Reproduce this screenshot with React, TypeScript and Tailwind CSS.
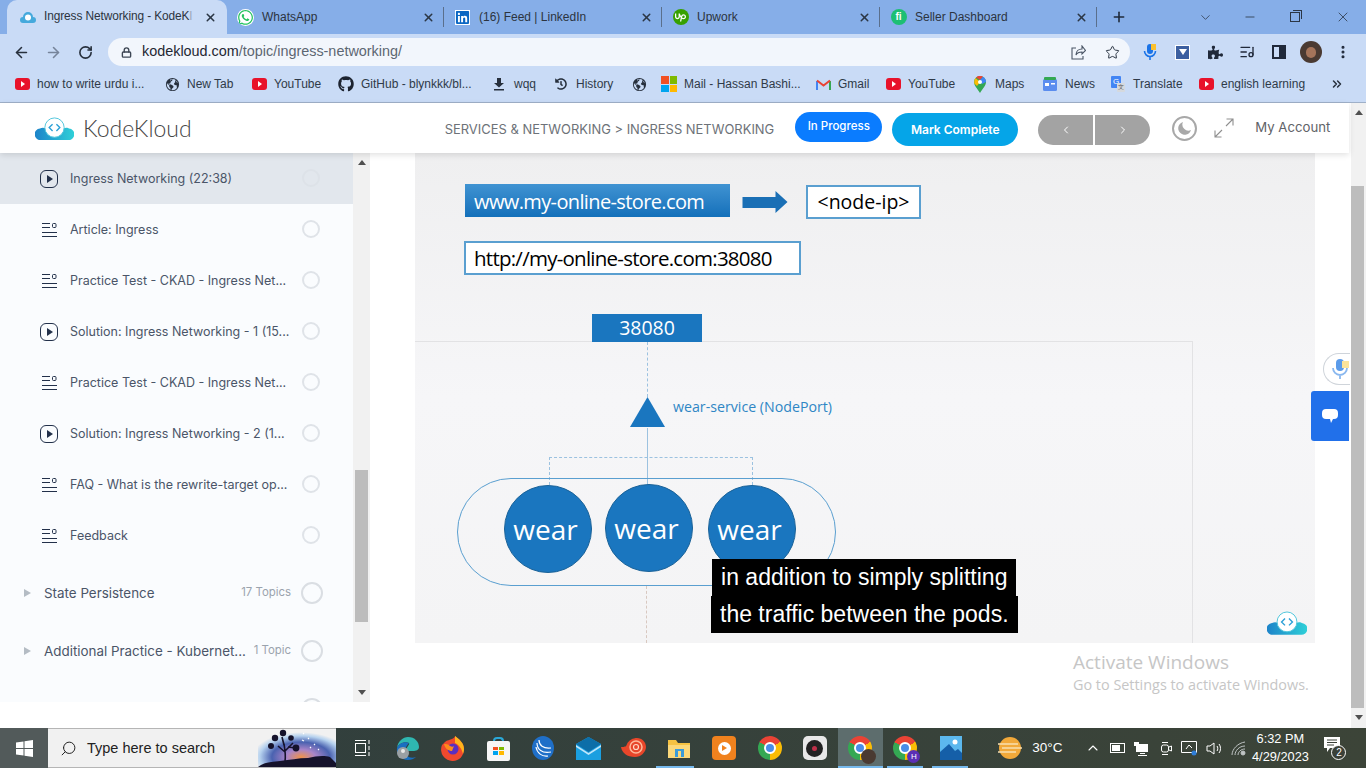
import React from 'react';
import { ArrowLeft, ArrowRight, RotateCw, Lock, Star, ListMusic, MoreVertical, ChevronDown, Minus, X, Plus, ChevronRight, ChevronLeft, Search, ChevronUp, ChevronsRight } from 'lucide-react';
import { FaWhatsapp, FaGithub, FaLinkedin, FaPuzzlePiece, FaHistory } from 'react-icons/fa';
import { SiUpwork } from 'react-icons/si';
import { IoEarth } from 'react-icons/io5';

const inter = "font-['Inter',sans-serif]";
const slide = "font-['Open_Sans',sans-serif]";

const Cloud = ({ size = 40, id }: { size?: number; id: string }) => (
  <svg width={size} height={size * 0.62} viewBox="0 0 40 25">
    <defs>
      <linearGradient id={id} x1="0" x2="1" y1="0" y2="0">
        <stop offset="0" stopColor="#1d83c9" />
        <stop offset="1" stopColor="#2fd0d8" />
      </linearGradient>
    </defs>
    <path d="M6 25a6 6 0 0 1-1-12c2-1 4-1 6 0 1-6 5-10 9-10s8 4 9 10c2-1 5-1 6 0a6 6 0 0 1-1 12z" fill={`url(#${id})`} />
    <circle cx="20" cy="12" r="10" fill="#fff" stroke="#52c6dc" strokeWidth="1" />
    <path d="M18 8.5 14.5 12l3.5 3.5M22 8.5l3.5 3.5-3.5 3.5" fill="none" stroke="#2a9fd6" strokeWidth="1.4" />
  </svg>
);

const YT = () => (
  <span className="w-[15px] h-[12px] rounded-[3px] bg-[#e8122a] flex items-center justify-center shrink-0">
    <span className="w-0 h-0 ml-px border-y-[3px] border-y-transparent border-l-[4px] border-l-white" />
  </span>
);

const CloseX = () => <X size={13} strokeWidth={2.8} className="text-[#2b3645] shrink-0" />;

const Tab = ({ icon, title, className }: { icon: React.ReactNode; title: string; className: string }) => (
  <div className={`relative flex items-center h-full pl-[10px] pr-[9px] ${className}`}>
    <span className="w-[17px] flex justify-center shrink-0">{icon}</span>
    <span className="ml-[8px] text-[12px] text-[#2c3440] flex-1 whitespace-nowrap">{title}</span>
    <CloseX />
    <span className="absolute right-0 top-[7px] h-[20px] w-px bg-[#5a6f8c]" />
  </div>
);

const Bookmark = ({ icon, label, className }: { icon: React.ReactNode; label?: string; className: string }) => (
  <div className={`flex items-center gap-[7px] text-[12px] text-[#2f3a48] whitespace-nowrap shrink-0 ${className}`}>
    <span className="w-[16px] flex justify-center shrink-0">{icon}</span>
    {label && <span>{label}</span>}
  </div>
);

const PlayIcon = () => (
  <span className="w-[18px] h-[18px] rounded-[6px] border-[1.5px] border-[#22304a] flex items-center justify-center shrink-0">
    <span className="w-0 h-0 ml-px border-y-[4px] border-y-transparent border-l-[6px] border-l-[#22304a]" />
  </span>
);

const ArticleIcon = () => (
  <svg width="15" height="14" viewBox="0 0 15 14" className="shrink-0 mx-[2px] mr-px" fill="none" stroke="#22304a" strokeWidth="1">
    <path d="M0 .5h8M0 4.5h8M0 9.5h15M0 13.5h15" />
    <rect x="10.5" y="0.5" width="3.5" height="4" rx="1" />
  </svg>
);

const Lesson = ({ kind, title, active }: { kind: 'play' | 'doc'; title: string; active?: boolean }) => (
  <div className={`flex items-center h-[51px] pl-[40px] pr-[33px] ${active ? 'bg-[#e2e7ed]' : ''}`}>
    {kind === 'play' ? <PlayIcon /> : <ArticleIcon />}
    <span className={`ml-[12px] mt-[2px] flex-1 text-[12.5px] text-[#4a5568] whitespace-nowrap ${inter}`}>{title}</span>
    <span className={`-mt-[2px] w-[18px] h-[18px] rounded-full border-2 ${active ? 'border-[#dde2e8]' : 'border-[#dfe3e8]'} shrink-0`} />
  </div>
);

const Section = ({ title, count }: { title?: string; count?: string }) => (
  <div className={`flex items-center h-[58px] pl-[24px] pr-[30px] ${inter}`}>
    <span className="w-0 h-0 border-y-[4px] border-y-transparent border-l-[7px] border-l-[#b4bcc4] shrink-0" />
    <span className="ml-[13px] flex-1 text-[13.4px] text-[#4a5568] whitespace-nowrap">{title}</span>
    <span className="text-[11.4px] text-[#9aa3ad] whitespace-nowrap mr-[10px]">{count}</span>
    <span className="w-[22px] h-[22px] rounded-full border-2 border-[#dadee3] shrink-0" />
  </div>
);

const Wear = ({ className }: { className: string }) => (
  <div className={`absolute w-[88px] h-[88px] rounded-full bg-[#1a76bf] border border-[#1a6298] flex items-center justify-center pr-[5px] text-white text-[28px] ${slide} ${className}`}>wear</div>
);

const TaskIcon = ({ children, active, bar }: { children: React.ReactNode; active?: boolean; bar?: string }) => (
  <div className={`relative w-[45.25px] h-full flex items-center justify-center shrink-0 ${active ? 'bg-[#5d6d6d]' : ''}`}>
    {children}
    {bar && <span className={`absolute bottom-0 h-[2px] bg-[#76b9ed] ${bar}`} />}
  </div>
);

const Chrome = ({ badge }: { badge?: React.ReactNode }) => (
  <span className="relative w-[24px] h-[24px] rounded-full block bg-[conic-gradient(from_300deg,#ea4335_0_33.3%,#fbbc05_33.3%_66.6%,#34a853_66.6%_100%)]">
    <span className="absolute inset-[6px] rounded-full bg-[#4a8de8] border-2 border-white box-content w-[8px] h-[8px]" />
    {badge}
  </span>
);

const SearchArt = () => (
  <svg className="absolute right-0 bottom-0" width="78" height="40" viewBox="0 0 78 40">
    <defs>
      <radialGradient id="halo" cx="0.55" cy="0.75" r="0.62">
        <stop offset="0" stopColor="#f0924a" />
        <stop offset="0.3" stopColor="#a884c8" />
        <stop offset="0.6" stopColor="#4a62b0" />
        <stop offset="0.85" stopColor="#b6d2ef" />
        <stop offset="1" stopColor="#f1f1f1" />
      </radialGradient>
    </defs>
    <rect width="78" height="40" fill="url(#halo)" />
    <path d="M0 40c6-5 14-5 22-6 10-1 18-3 28-3 8-2 16-3 22-1l6 6v4z" fill="#15122b" />
    <path d="M27 34c1-6 0-11-1-17M27 25l-7-6M27 24l8-8M26 18l-2-8M30 20l8 1" fill="none" stroke="#15122b" strokeWidth="1.6" />
    <circle cx="25" cy="6" r="3.2" fill="#15122b" />
    <circle cx="17" cy="11" r="3.2" fill="#15122b" />
    <circle cx="33" cy="11" r="2.8" fill="#15122b" />
    <circle cx="13" cy="19" r="3" fill="#15122b" />
    <circle cx="38" cy="21" r="3.4" fill="#15122b" />
    <path d="M45 6l1 1M50 11l1 1M44 13l2 1M56 17l1 1M52 20l1 1M60 22l1 1" stroke="#fff" strokeWidth="1.2" />
  </svg>
);

export default function App() {
  return (
    <div className="w-[1366px] h-[768px] overflow-hidden flex flex-col bg-white font-['Liberation_Sans',sans-serif]">
      {/* tabs */}
      <div className="h-[34px] bg-[#86aee8] flex items-center shrink-0 pl-[7px]">
        <div className="relative h-full w-[220px] shrink-0 flex items-center bg-[#c9dbf6] rounded-t-[10px] pl-[13px] pr-[10px]">
          <svg width="16" height="12" viewBox="0 0 16 12" className="shrink-0"><path d="M3 12a3 3 0 0 1 0-6 5 5 0 0 1 10 0 3 3 0 0 1 0 6z" fill="#45a9dc" /><circle cx="8" cy="6.5" r="3" fill="#fff" /></svg>
          <span className="ml-[8px] text-[11.9px] text-[#2c3440] flex-1 whitespace-nowrap tracking-[-0.1px]">Ingress Networking - KodeK<span className="text-[#9aa6b8]">l</span></span>
          <CloseX />
        </div>
        <Tab className="w-[217px]" title="WhatsApp" icon={<FaWhatsapp size={17} className="text-[#25c35f] bg-white rounded-full" />} />
        <Tab className="w-[218px]" title="(16) Feed | LinkedIn" icon={<FaLinkedin size={15} className="text-[#0a66c2] bg-white" />} />
        <Tab className="w-[218px]" title="Upwork" icon={<span className="w-[16px] h-[16px] rounded-full bg-[#37a000] flex items-center justify-center"><SiUpwork size={11} className="text-white" /></span>} />
        <Tab className="w-[217px]" title="Seller Dashboard" icon={<span className="w-[16px] h-[16px] rounded-full bg-[#1dbf73] text-white text-[10px] font-bold leading-none flex items-center justify-center">fi</span>} />
        <Plus size={16} strokeWidth={2.4} className="ml-[14px] text-[#1f2a3a]" />
        <div className="ml-auto flex items-center text-[#2b3645]">
          <ChevronDown size={15} strokeWidth={1.2} className="mr-[30px]" />
          <Minus size={14} strokeWidth={1.4} className="mr-[33px]" />
          <span className="relative w-[10px] h-[10px] mr-[35px] border border-[#2b3645]"><span className="absolute -top-[3px] left-[2px] w-[9px] h-[9px] border-t border-r border-[#2b3645]" /></span>
          <X size={16} strokeWidth={1.2} className="mr-[15px]" />
        </div>
      </div>
      {/* toolbar */}
      <div className="h-[34px] bg-[#c9dbf6] flex items-center shrink-0 pt-[2px]">
        <ArrowLeft size={17} strokeWidth={2.2} className="ml-[13px] text-[#27303d]" />
        <ArrowRight size={17} strokeWidth={2.2} className="ml-[15px] text-[#76849a]" />
        <RotateCw size={15} strokeWidth={2.6} className="ml-[16px] text-[#27303d]" />
        <div className="ml-[15px] w-[1022px] h-[28px] rounded-full bg-[#f2f6fc] flex items-center pl-[13px] pr-[10px]">
          <Lock size={11} strokeWidth={3} className="text-[#3d4654]" />
          <span className="ml-[10px] text-[14.4px] text-[#5d6672]"><span className="text-[#1f2733]">kodekloud.com</span>/topic/ingress-networking/</span>
          <svg width="15" height="15" viewBox="0 0 15 15" fill="none" stroke="#4a5565" strokeWidth="1.1" className="ml-auto -translate-x-[2px]"><path d="M5 3H1v11h11v-3M5 10c0-4 3-6 6-6V1l3.5 4.5L11 9V7c-3 0-5 1-6 3z" /></svg>
          <Star size={15} strokeWidth={1.6} className="ml-[17px] text-[#2e3846]" />
        </div>
        <svg width="16" height="18" viewBox="0 0 16 18" className="ml-[12px]"><rect x="5" y="1" width="6" height="10" rx="3" fill="#1a73e8" /><rect x="9" y="1" width="5" height="6" fill="#fbc02d" /><path d="M2.5 8a5.5 5.5 0 0 0 11 0M8 13.5V17" fill="none" stroke="#1a73e8" strokeWidth="1.6" /></svg>
        <span className="ml-[17px] w-[15px] h-[15px] bg-[#3c5fa0] border border-white flex items-center justify-center"><span className="w-0 h-0 border-x-[4px] border-x-transparent border-t-[6px] border-t-white" /></span>
        <FaPuzzlePiece size={15} className="ml-[18px] text-[#20293a]" />
        <ListMusic size={16} className="ml-[16px] text-[#20293a]" />
        <span className="ml-[17px] w-[14px] h-[14px] border-2 border-[#20293a] flex justify-end"><span className="w-[5px] h-full bg-[#20293a]" /></span>
        <span className="relative ml-[14px] w-[22px] h-[22px] rounded-full bg-[#4a3a32] block overflow-hidden"><span className="absolute left-[6px] top-[6px] w-[10px] h-[11px] rounded-full bg-[#a5745a]" /></span>
        <MoreVertical size={16} strokeWidth={2.6} className="ml-[13px] text-[#20293a]" />
      </div>
      {/* bookmarks */}
      <div className="h-[35px] bg-[#c9dbf6] border-b border-[#9fb0c8] flex items-center shrink-0 pl-[14px] pb-[2px]">
        <Bookmark className="w-[150px]" icon={<YT />} label="how to write urdu i..." />
        <Bookmark className="w-[87px]" icon={<IoEarth size={15} className="text-[#27303d]" />} label="New Tab" />
        <Bookmark className="w-[87px]" icon={<YT />} label="YouTube" />
        <Bookmark className="w-[153px]" icon={<FaGithub size={16} className="text-[#1c2330]" />} label="GitHub - blynkkk/bl..." />
        <Bookmark className="w-[62px]" icon={<svg width="12" height="14" viewBox="0 0 12 14" fill="#27303d"><path d="M4 1h4v5h3L6 10.5 1 6h3zM1 12h10v1.4H1z" /></svg>} label="wqq" />
        <Bookmark className="w-[78px]" icon={<FaHistory size={12} className="text-[#27303d]" />} label="History" />
        <Bookmark className="w-[30px]" icon={<IoEarth size={15} className="text-[#27303d]" />} />
        <Bookmark className="w-[154px]" icon={<span className="grid grid-cols-2 gap-px w-[16px] h-[16px]"><i className="bg-[#f25022]" /><i className="bg-[#7fba00]" /><i className="bg-[#00a4ef]" /><i className="bg-[#ffb900]" /></span>} label="Mail - Hassan Bashi..." />
        <Bookmark className="w-[70px]" icon={<svg width="15" height="11" viewBox="0 0 15 11"><path d="M1 11V2" stroke="#4285f4" strokeWidth="2" /><path d="M14 11V2" stroke="#34a853" strokeWidth="2" /><path d="M1 1.5 7.5 6.5 14 1.5" fill="none" stroke="#ea4335" strokeWidth="2" /></svg>} label="Gmail" />
        <Bookmark className="w-[87px]" icon={<YT />} label="YouTube" />
        <Bookmark className="w-[70px]" icon={<svg width="12" height="17" viewBox="0 0 12 17"><path d="M6 17C3 12 0 9.500 0 6a6 6 0 0 1 12 0c0 3.500-3 6-6 11z" fill="#34a853" /><path d="M1.500 2 6 6 3 10 .4 7.500C0 5 .5 3.500 1.500 2z" fill="#fbbc05" /><path d="M2 1.500A6 6 0 0 1 9 .8L6 4z" fill="#ea4335" /><path d="M9 .8a6 6 0 0 1 3 5.200L8 8 6 4z" fill="#4285f4" /><circle cx="6" cy="6" r="2" fill="#fff" /></svg>} label="Maps" />
        <Bookmark className="w-[68px]" icon={<svg width="14" height="14" viewBox="0 0 14 14"><rect y="2" width="14" height="12" rx="1.500" fill="#5b8def" /><rect x="1" width="12" height="3" rx="1" fill="#34a853" /><rect x="2" y="6" width="4" height="3" fill="#fff" /><rect x="8" y="6" width="4" height="1.500" fill="#fff" /></svg>} label="News" />
        <Bookmark className="w-[88px]" icon={<span className="relative w-[14px] h-[16px]"><span className="absolute left-0 top-0 w-[10px] h-[12px] rounded-[1px] bg-[#4285f4] text-white text-[8px] leading-[12px] text-center">G</span><span className="absolute right-0 bottom-0 w-[8px] h-[9px] rounded-[1px] bg-[#d5d9de] text-[#555] text-[6px] leading-[9px] text-center">文</span></span>} label="Translate" />
        <Bookmark className="w-[132px]" icon={<YT />} label="english learning" />
        <ChevronsRight size={14} strokeWidth={2.6} className="text-[#27303d]" />
      </div>
      <div className="flex-1 flex min-h-0">
        <div className="w-[1351px] flex flex-col min-h-0">
          {/* site header */}
          <div className={`relative z-10 h-[50px] shrink-0 w-[1349px] bg-white flex items-center shadow-[0_2px_6px_rgba(0,0,0,0.12)] ${inter}`}>
            <div className="ml-[35px]"><Cloud size={39} id="kk-head" /></div>
            <span className="ml-[9px] text-[23px] font-light text-[#454545] font-['Lato',sans-serif]">KodeKloud</span>
            <span className="ml-[253px] mt-[3px] text-[12.95px] text-[#6d7278] whitespace-nowrap">SERVICES &amp; NETWORKING &gt; INGRESS NETWORKING</span>
            <span className="ml-[21px] -mt-[2px] w-[87px] h-[30px] rounded-full bg-[#0a7cff] text-white text-[11.5px] font-medium flex items-center justify-center">In Progress</span>
            <span className="ml-[10px] mt-[3px] w-[126px] h-[33px] rounded-full bg-[#05a5e8] text-white text-[12px] font-semibold flex items-center justify-center">Mark Complete</span>
            <div className="ml-[20px] mt-[4px] flex gap-[2px]">
              <span className="w-[55px] h-[30px] rounded-l-full bg-[#a3a3a3] flex items-center justify-center"><ChevronLeft size={12} className="text-white" /></span>
              <span className="w-[55px] h-[30px] rounded-r-full bg-[#a3a3a3] flex items-center justify-center"><ChevronRight size={12} className="text-white" /></span>
            </div>
            <span className="ml-[22px] w-[25px] h-[25px] rounded-full border-2 border-[#a8a8a8] flex items-center justify-center">
              <svg width="15" height="15" viewBox="0 0 15 15"><path d="M6 1a6.500 6.500 0 1 0 8 8A6 6 0 0 1 6 1z" fill="#a8a8a8" /></svg>
            </span>
            <svg width="20" height="20" viewBox="0 0 20 20" fill="none" stroke="#8f8f8f" strokeWidth="1.1" className="ml-[17px]"><path d="M1 19 8 12M1 12.500V19h6.500M19 1l-7 7M12.500 1H19v6.500" /></svg>
            <span className="ml-[21px] text-[13.2px] text-[#5f6368] whitespace-nowrap">My Account</span>
          </div>
          {/* body */}
          <div className="flex-1 flex min-h-0">
            <div className="flex h-[549px] shrink-0">
              <div className={`w-[353px] bg-[#fafcfe] overflow-hidden shrink-0 ${inter}`}>
                <Lesson active kind="play" title="Ingress Networking (22:38)" />
                <Lesson kind="doc" title="Article: Ingress" />
                <Lesson kind="doc" title="Practice Test - CKAD - Ingress Net..." />
                <Lesson kind="play" title="Solution: Ingress Networking - 1 (15..." />
                <Lesson kind="doc" title="Practice Test - CKAD - Ingress Net..." />
                <Lesson kind="play" title="Solution: Ingress Networking - 2 (1..." />
                <Lesson kind="doc" title="FAQ - What is the rewrite-target op..." />
                <Lesson kind="doc" title="Feedback" />
                <div className="h-[3px]" />
                <Section title="State Persistence" count="17 Topics" />
                <Section title="Additional Practice - Kubernet..." count="1 Topic" />
                <Section />
              </div>
              <div className="w-[17px] bg-[#f1f1f1] shrink-0 flex flex-col items-center justify-between py-[7px] relative">
                <span className="w-0 h-0 border-x-[4px] border-x-transparent border-b-[5px] border-b-[#505050]" />
                <span className="absolute left-[2px] right-[2px] top-[317px] h-[152px] bg-[#bcbcbc]" />
                <span className="w-0 h-0 border-x-[4px] border-x-transparent border-t-[5px] border-t-[#505050]" />
              </div>
            </div>
            <div className="relative flex-1 bg-white overflow-hidden">
              {/* video frame, a free canvas */}
              <div className="absolute left-[45px] top-0 w-[900px] h-[490px] bg-gradient-to-b from-[#efeff0] via-[#f6f6f8] to-[#f4f4f5]">
                <div className={`absolute left-[50px] top-[31px] w-[265px] h-[33px] pt-[2px] bg-gradient-to-b from-[#3f93d2] to-[#1270ba] text-white text-[20px] tracking-[-0.62px] pl-[9px] flex items-center ${slide}`}>www.my-online-store.com</div>
                <svg className="absolute left-[327px] top-[38px]" width="46" height="22" viewBox="0 0 45 22"><path d="M0 6h33V0l12 11-12 11v-5H0z" fill="#1a6fb5" /></svg>
                <div className={`absolute left-[391px] top-[32px] w-[115px] h-[34px] bg-white border-2 border-[#5a9fd0] text-black text-[19.5px] flex items-center justify-center ${slide}`}>&lt;node-ip&gt;</div>
                <div className={`absolute left-[49px] top-[88px] w-[337px] h-[34px] bg-white border-2 border-[#5a9fd0] text-black text-[20.5px] tracking-[-0.75px] pl-[8px] flex items-center ${slide}`}>http://my-online-store.com:38080</div>
                <div className="absolute left-0 top-[188px] w-[778px] h-[302px] border-t border-r border-[#e2e2e4]" />
                <div className={`absolute left-[177px] top-[161px] w-[110px] h-[28px] bg-[#1a76bf] text-white text-[19.5px] flex items-center justify-center ${slide}`}>38080</div>
                <div className="absolute left-[232px] top-[189px] h-[55px] border-l border-dashed border-[#9cc2e0]" />
                <svg className="absolute left-[214px] top-[244px]" width="37" height="31" viewBox="0 0 37 31"><path d="M18.500 0 36 30H1z" fill="#1a76bf" /></svg>
                <span className={`absolute left-[258px] top-[243px] text-[14.2px] text-[#2f86c5] whitespace-nowrap ${slide}`}>wear-service (NodePort)</span>
                <div className="absolute left-[232px] top-[275px] h-[57px] border-l border-[#9cc2e0]" />
                <div className="absolute left-[134px] top-[304px] w-[204px] h-[28px] border-t border-x border-dashed border-[#9cc2e0]" />
                <div className="absolute left-[42px] top-[325px] w-[379px] h-[108px] rounded-full border border-[#5a9fd0]" />
                <Wear className="left-[89px] top-[332px]" />
                <Wear className="left-[190px] top-[331px]" />
                <Wear className="left-[293px] top-[332px]" />
                <div className="absolute left-[231px] top-[433px] h-[57px] border-l border-dashed border-[#d8c8c0]" />
                <div className="absolute left-[852px] top-[457px]"><Cloud size={40} id="kk-video" /></div>
                <div className="absolute left-[296px] top-[406px] text-white text-[23px] leading-[37px] whitespace-nowrap flex flex-col items-center">
                  <span className="bg-black px-[9px]">in addition to simply splitting</span>
                  <span className="bg-black px-[9px]">the traffic between the pods.</span>
                </div>
              </div>
              <div className={`absolute left-[703px] top-[497px] text-[#c6c6c6] ${slide}`}>
                <p className="text-[19px] leading-[24px]">Activate Windows</p>
                <p className="text-[14.4px] leading-[22px] whitespace-nowrap">Go to Settings to activate Windows.</p>
              </div>
              {/* floating widgets */}
              <div className="absolute right-[1px] top-[200px] w-[27px] h-[32px] rounded-l-full border border-[#cfd4da] border-r-0 bg-white flex items-center justify-center overflow-hidden">
                <svg width="18" height="22" viewBox="0 0 18 22" className="ml-[6px]"><rect x="5" y="1" width="8" height="12" rx="4" fill="#5b9bea" /><rect x="11" y="3" width="7" height="7" fill="#fbe39a" /><path d="M2 10a7 7 0 0 0 14 0M9 17v4" fill="none" stroke="#8ab8ef" strokeWidth="1.8" /></svg>
              </div>
              <div className="absolute right-[2px] top-[238px] w-[38px] h-[50px] rounded-l-[3px] bg-[#2170ea] flex items-center justify-center">
                <svg width="16" height="14" viewBox="0 0 16 14" fill="#fff"><path d="M4 0h8a4 4 0 0 1 4 4v2a4 4 0 0 1-4 4h-1l-2 4-1-4H4a4 4 0 0 1-4-4V4a4 4 0 0 1 4-4z" /></svg>
              </div>
            </div>
          </div>
        </div>
        <div className="w-[15px] bg-[#f1f1f1] shrink-0 flex flex-col items-center justify-between pt-[7px] pb-[8px] relative">
          <span className="w-0 h-0 border-x-[4px] border-x-transparent border-b-[5px] border-b-[#505050]" />
          <span className="absolute left-0 right-[2px] top-[83px] bottom-[20px] bg-[#bdbdbd]" />
          <span className="w-0 h-0 border-x-[4px] border-x-transparent border-t-[5px] border-t-[#505050]" />
        </div>
      </div>
      {/* taskbar */}
      <div className="h-[40px] shrink-0 bg-gradient-to-r from-[#2f3e3e] to-[#3c4438] flex items-center text-white">
        <div className="w-[48px] h-full bg-[#525a5a] flex items-center justify-center">
          <svg width="17" height="17" viewBox="0 0 17 17" fill="#fff"><path d="M0 2.500 7.500 1.400v6.600H0zM8.500 1.200 17 0v8H8.500zM0 9h7.500v6.600L0 14.500zM8.500 9H17v8l-8.500-1.200z" /></svg>
        </div>
        <div className="w-[288px] h-full bg-[#f1f1f1] border-y border-[#b5b5b5] flex items-center pl-[12px] relative overflow-hidden">
          <Search size={17} strokeWidth={1.4} className="text-[#222] -scale-x-100" />
          <span className="ml-[10px] mt-px text-[14.5px] text-[#222]">Type here to search</span>
          <SearchArt />
        </div>
        <div className="ml-[2px] w-[48px] flex justify-center shrink-0">
          <svg width="17" height="18" viewBox="0 0 17 18" fill="none" stroke="#fff"><rect x="1.500" y="4.500" width="10" height="9" /><path d="M1 1.500h11M1 16.500h11M15 1v4M15 7v4M15 13v4" /></svg>
        </div>
        <div className="ml-[-1px] flex items-center h-full">
          <TaskIcon>
            <svg width="24" height="24" viewBox="0 0 24 24"><path d="M1 12C2 5 7 1 12 1c7 0 11 5 11 10 0 3-3 4-6 4H10c0-4 4-6 3-8-4-2-10 0-12 5z" fill="#2fb7b0" /><path d="M1 12c-1 6 4 12 11 12 3 0 6-1 8-3-6 2-11-1-11-6 0-3 2-6 4-8-4-2-10 0-12 5z" fill="#1a6fc0" /><circle cx="7" cy="17" r="6" fill="#9aa0a4" /><circle cx="7" cy="15" r="2" fill="#e8e8e8" /></svg>
          </TaskIcon>
          <TaskIcon>
            <svg width="24" height="25" viewBox="0 0 24 25"><path d="M12 25A11.500 11.500 0 0 1 1 9l3-3c2-2 5-2 7-3 2-1 3-2 3-3 4 3 9 7 9 13 0 7-5 12-11 12z" fill="#f0492e" /><path d="M14 0c4 3 9 7 9 13 0 2-.5 3-1 5-1-5-4-9-8-11z" fill="#ffb41c" /><circle cx="12" cy="13" r="5.500" fill="#5b2fc0" /><path d="M3 8c2 0 4 0 6 2 2 1 3 1 4 0l-2 5C8 15 4 13 3 8z" fill="#ff8a1c" /></svg>
          </TaskIcon>
          <TaskIcon>
            <span className="relative w-[23px] h-[24px] mt-[1px]">
              <span className="absolute left-[6px] top-0 w-[11px] h-[7px] rounded-t-[4px] border-2 border-b-0 border-[#2aa8d8]" />
              <span className="absolute left-0 right-0 bottom-0 h-[20px] rounded-[2px] bg-[#f6f6f6] grid grid-cols-2 gap-px p-[6px]"><i className="bg-[#f25022]" /><i className="bg-[#7fba00]" /><i className="bg-[#00a4ef]" /><i className="bg-[#ffb900]" /></span>
            </span>
          </TaskIcon>
          <TaskIcon>
            <svg width="22" height="24" viewBox="0 0 22 24"><ellipse cx="11" cy="12" rx="11" ry="12" fill="#1f6fc8" /><path d="M5 7c0 6 5 11 14 9M4 11c1 6 6 10 12 9M7 4c0 5 4 9 12 8" fill="none" stroke="#fff" strokeWidth="1.200" /></svg>
          </TaskIcon>
          <TaskIcon>
            <svg width="25" height="23" viewBox="0 0 25 23"><path d="M0 7 12.500 0 25 7v16H0z" fill="#1a9fe0" /><path d="M0 7l12.500 8L25 7 12.500 0z" fill="#0d6ea8" /><path d="M0 8l12.500 8L25 8v2L12.500 18 0 10z" fill="#bfe6fa" /></svg>
          </TaskIcon>
          <TaskIcon>
            <svg width="25" height="20" viewBox="0 0 25 20"><path d="M0 9c4 0 5 0 6-3 2-4 6-6 10-6 5 0 9 4 9 9s-5 10-11 10C6 19 1 15 0 9z" fill="#e8462a" /><circle cx="15" cy="9" r="6" fill="none" stroke="#ffb89a" strokeWidth="1.500" /><circle cx="15" cy="9" r="2.500" fill="none" stroke="#ffd9c8" strokeWidth="1.200" /></svg>
          </TaskIcon>
          <TaskIcon bar="left-[-1px] right-[8px]">
            <svg width="22" height="19" viewBox="0 0 22 19"><path d="M0 1h8l2 3h12v15H0z" fill="#f5c242" /><path d="M0 6h22v13H0z" fill="#fbd87a" /><rect x="7" y="10" width="9" height="8" fill="#3a9bd9" /><rect x="10" y="12" width="3" height="6" fill="#fbd87a" /></svg>
          </TaskIcon>
          <TaskIcon>
            <span className="w-[24px] h-[24px] rounded-[4px] bg-[#f0821e] flex items-center justify-center">
              <span className="w-[13px] h-[13px] rounded-full bg-white flex items-center justify-center"><span className="w-0 h-0 ml-px border-y-[3px] border-y-transparent border-l-[5px] border-l-[#f0821e]" /></span>
            </span>
          </TaskIcon>
          <TaskIcon><Chrome /></TaskIcon>
          <TaskIcon>
            <span className="w-[24px] h-[24px] rounded-[5px] bg-[#e8e8e8] flex items-center justify-center">
              <span className="w-[17px] h-[17px] rounded-full bg-[#222] flex items-center justify-center"><span className="w-[5px] h-[5px] rounded-full bg-[#c0304a]" /></span>
            </span>
          </TaskIcon>
          <TaskIcon active bar="left-0 right-0"><Chrome badge={<i className="absolute right-[-4px] bottom-[-4px] w-[15px] h-[15px] rounded-full bg-[#4a3a32]" />} /></TaskIcon>
          <TaskIcon bar="left-[4px] right-[5px]"><Chrome badge={<i className="absolute right-[-3px] bottom-[-3px] w-[13px] h-[13px] rounded-full bg-[#5b2fb5] text-white text-[8px] not-italic flex items-center justify-center">H</i>} /></TaskIcon>
          <TaskIcon bar="left-[4px] right-[5px]">
            <svg width="22" height="24" viewBox="0 0 22 24"><rect width="22" height="24" fill="#5cb8ee" /><path d="M0 24V16L9 8l6 7 3-2 4 4v7z" fill="#155fa8" /><circle cx="15" cy="6" r="2.500" fill="#fff" /></svg>
          </TaskIcon>
        </div>
        <svg width="24" height="22" viewBox="0 0 24 22" className="ml-[25px] shrink-0"><circle cx="12" cy="11" r="11" fill="#f2a93a" /><path d="M0 7h20M4 11h20M0 15h18" stroke="#f9e0b0" strokeWidth="1.500" /></svg>
        <span className="ml-[10px] text-[13.5px] whitespace-nowrap">30°C</span>
        <ChevronUp size={16} strokeWidth={1.6} className="ml-[23px]" />
        <span className="ml-[9px] w-[15px] h-[10px] border border-white flex items-center pl-px"><i className="w-[8px] h-[6px] bg-white" /></span>
        <svg width="15" height="15" viewBox="0 0 15 15" className="ml-[9px]" fill="#fff"><rect x="2" y="3" width="12" height="8" /><rect x="6" y="12" width="5" height="1" /><rect x="4" y="14" width="9" height="1" /><rect x="0" y="1" width="5" height="4" /></svg>
        <svg width="12" height="15" viewBox="0 0 12 15" className="ml-[11px]" fill="none" stroke="#fff"><rect x="1.500" y="4" width="7" height="7" rx="2" /><path d="M9 6l2.500-1v5L9 9M2 1.500h6M2 13.500h6" /></svg>
        <svg width="16" height="15" viewBox="0 0 16 15" className="ml-[9px]" fill="none" stroke="#fff"><path d="M.5.500h15v11H.5zM5 8l3-4 3 3" /><circle cx="13" cy="12" r="2.500" fill="#2f7ed8" stroke="none" /></svg>
        <svg width="17" height="15" viewBox="0 0 17 15" className="ml-[9px]" fill="none" stroke="#fff"><path d="M1 5h3l4-3v11l-4-3H1zM11 5c1 1 1 4 0 5M13 3c2 2 2 7 0 9" /></svg>
        <svg width="15" height="15" viewBox="0 0 15 15" className="ml-[8px]" fill="none" stroke="#bfc4c4"><path d="M1 14C1 8 7 2 14 1M4 14c0-4 4-9 10-9M7 14c0-3 3-6 7-6" /><circle cx="12" cy="12" r="2" fill="#bfc4c4" /></svg>
        <div className="ml-[3px] flex flex-col items-center text-[12.8px] leading-[18px] w-[62px] whitespace-nowrap">
          <span>6:32 PM</span>
          <span>4/29/2023</span>
        </div>
        <div className="relative ml-[13px] -mt-[6px]">
          <svg width="16" height="16" viewBox="0 0 16 16" fill="#fff"><path d="M0 0h16v11H6l-3 4v-4H0z" /><path d="M3 3h10M3 5.500h10M3 8h7" stroke="#3a4038" strokeWidth="1" /></svg>
          <span className="absolute left-[7px] top-[8px] w-[15px] h-[15px] rounded-full bg-[#3a4038] border border-white text-[10px] flex items-center justify-center">2</span>
        </div>
      </div>
    </div>
  );
}
